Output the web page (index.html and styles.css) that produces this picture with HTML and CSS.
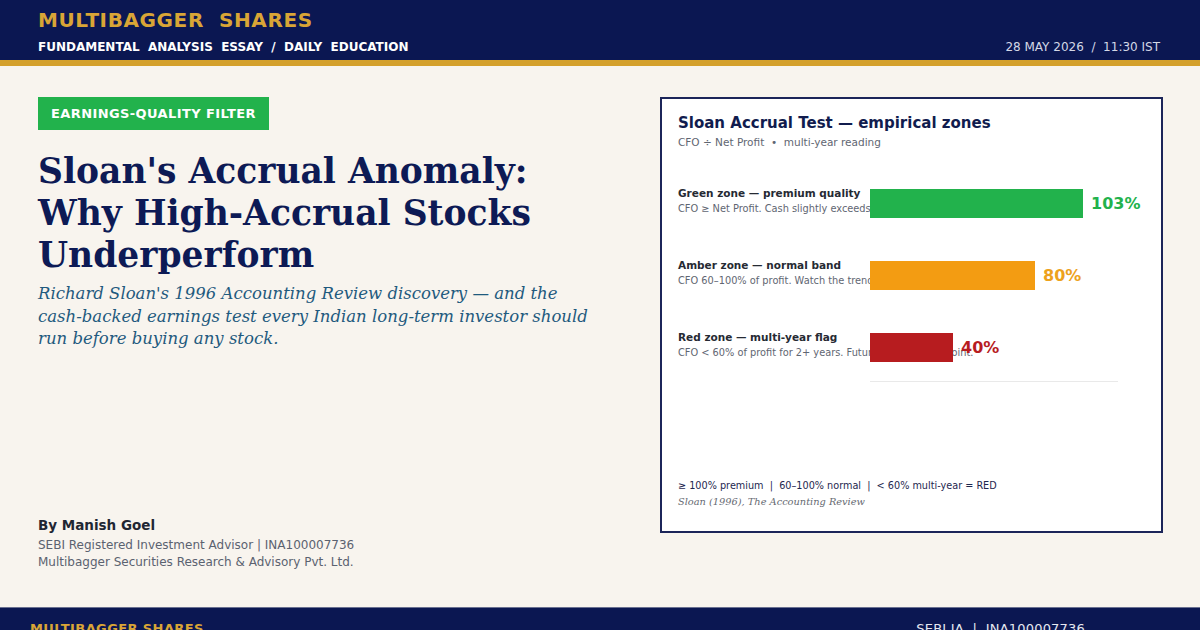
FILE: index.html
```html
<!DOCTYPE html>
<html lang="en">
<head>
<meta charset="utf-8">
<title>Sloan's Accrual Anomaly</title>
<link rel="stylesheet" href="styles.css">
</head>
<body>
<div class="page">
  <header class="masthead">
    <div class="brand">
      <div class="brand-name">MULTIBAGGER&nbsp; SHARES</div>
      <div class="brand-tag">FUNDAMENTAL&nbsp; ANALYSIS&nbsp; ESSAY&nbsp; /&nbsp; DAILY&nbsp; EDUCATION</div>
    </div>
    <div class="dateline">28 MAY 2026&nbsp; /&nbsp; 11:30 IST</div>
  </header>
  <div class="gold-rule"></div>

  <main class="main">
    <section class="lead">
      <div class="badge">EARNINGS-QUALITY FILTER</div>
      <h1 class="title">Sloan's Accrual Anomaly: Why High-Accrual Stocks Underperform</h1>
      <p class="dek">Richard Sloan's 1996 Accounting Review discovery — and the cash-backed earnings test every Indian long-term investor should run before buying any stock.</p>
      <div class="author">
        <div class="author-name">By Manish Goel</div>
        <div class="author-line">SEBI Registered Investment Advisor | INA100007736</div>
        <div class="author-line">Multibagger Securities Research &amp; Advisory Pvt. Ltd.</div>
      </div>
    </section>

    <aside class="card">
      <div class="card-title">Sloan Accrual Test — empirical zones</div>
      <div class="card-sub">CFO ÷ Net Profit&nbsp; •&nbsp; multi-year reading</div>

      <div class="rows">
        <div class="row">
          <div class="row-text">
            <div class="row-label">Green zone — premium quality</div>
            <div class="row-desc">CFO ≥ Net Profit. Cash slightly exceeds reported profit.</div>
          </div>
          <div class="track">
            <div class="bar bar-green" style="width:213px"></div>
            <div class="val val-green">103%</div>
          </div>
        </div>
        <div class="row">
          <div class="row-text">
            <div class="row-label">Amber zone — normal band</div>
            <div class="row-desc">CFO 60–100% of profit. Watch the trend closely.</div>
          </div>
          <div class="track">
            <div class="bar bar-amber" style="width:165px"></div>
            <div class="val val-amber">80%</div>
          </div>
        </div>
        <div class="row">
          <div class="row-text">
            <div class="row-label">Red zone — multi-year flag</div>
            <div class="row-desc">CFO &lt; 60% of profit for 2+ years. Future returns disappoint.</div>
          </div>
          <div class="track">
            <div class="bar bar-red" style="width:83px"></div>
            <div class="val val-red">40%</div>
          </div>
        </div>
        <div class="axis"></div>
      </div>

      <div class="legend">
        <div class="legend-key">≥ 100% premium&nbsp; |&nbsp; 60–100% normal&nbsp; |&nbsp; &lt; 60% multi-year = RED</div>
        <div class="legend-src">Sloan (1996), The Accounting Review</div>
      </div>
    </aside>
  </main>

  <footer class="footer">
    <div class="footer-brand">MULTIBAGGER SHARES</div>
    <div class="footer-reg">SEBI IA&nbsp; |&nbsp; INA100007736</div>
  </footer>
</div>
</body>
</html>
```

FILE: styles.css
```css
* { box-sizing: border-box; }

html, body {
  margin: 0;
  padding: 0;
}

body {
  font-family: "DejaVu Sans", "Liberation Sans", sans-serif;
  background: #f8f4ee;
}

.page {
  width: 1200px;
  height: 630px;
  overflow: hidden;
  display: flex;
  flex-direction: column;
  background: #f8f4ee;
}

/* ---------- masthead ---------- */
.masthead {
  height: 60px;
  flex: none;
  background: #0b1752;
  display: flex;
  justify-content: space-between;
  align-items: flex-end;
  padding: 0 40px 5px 38px;
}

.brand-name {
  color: #d9a536;
  font-weight: bold;
  font-size: 20px;
  line-height: 24px;
  letter-spacing: 0.6px;
}

.brand-tag {
  color: #ffffff;
  font-weight: bold;
  font-size: 12px;
  line-height: 15px;
  letter-spacing: 0;
  margin-top: 8px;
}

.dateline {
  color: #d4d8e6;
  font-size: 12px;
  line-height: 15px;
}

.gold-rule {
  height: 6px;
  flex: none;
  background: #d4a02c;
}

/* ---------- main ---------- */
.main {
  height: 541px;
  flex: none;
  display: flex;
  padding: 31px 37px 36px 38px;
}

.lead {
  width: 622px;
  flex: none;
  display: flex;
  flex-direction: column;
  align-items: flex-start;
}

.badge {
  background: #22b24c;
  color: #ffffff;
  font-weight: bold;
  font-size: 13px;
  letter-spacing: 0.4px;
  height: 33px;
  line-height: 33px;
  padding: 0 13px;
}

.title {
  margin: 20px 0 0;
  font-family: "DejaVu Serif", "Liberation Serif", serif;
  font-weight: bold;
  font-size: 34.5px;
  line-height: 42px;
  color: #0d1a55;
  width: 540px;
}

.dek {
  margin: 7px 0 0;
  font-family: "DejaVu Serif", "Liberation Serif", serif;
  font-style: italic;
  font-size: 16.5px;
  line-height: 22.5px;
  color: #1f5a7e;
  width: 565px;
}

.author {
  margin-top: auto;
}

.author-name {
  font-weight: bold;
  font-size: 13.5px;
  line-height: 18px;
  color: #1f2633;
  margin-bottom: 3px;
}

.author-line {
  font-size: 12px;
  line-height: 17px;
  color: #5b6270;
}

/* ---------- card ---------- */
.card {
  width: 503px;
  height: 436px;
  flex: none;
  background: #ffffff;
  border: 2px solid #1c2559;
  padding: 15px 16px 21px 16px;
  display: flex;
  flex-direction: column;
}

.card-title {
  font-weight: bold;
  font-size: 15px;
  line-height: 19px;
  color: #111c4e;
}

.card-sub {
  font-size: 10.5px;
  line-height: 14px;
  color: #5f6672;
  margin-top: 2px;
}

.rows {
  margin-top: 40px;
  display: flex;
  flex-direction: column;
  gap: 43px;
}

.row {
  display: grid;
  grid-template-columns: 192px 248px;
  height: 29px;
}

.row-text {
  grid-column: 1 / 3;
  grid-row: 1;
  margin-top: -4px;
  white-space: nowrap;
}

.row-label {
  font-weight: bold;
  font-size: 10.5px;
  line-height: 16px;
  color: #262a33;
}

.row-desc {
  font-size: 9.8px;
  line-height: 16px;
  color: #5f6672;
}

.track {
  grid-column: 2;
  grid-row: 1;
  display: flex;
  align-items: center;
  gap: 8px;
  z-index: 1;
}

.bar {
  height: 29px;
  flex: none;
}

.bar-green { background: #22b24c; }
.bar-amber { background: #f39c12; }
.bar-red   { background: #b71c1f; }

.val {
  font-weight: bold;
  font-size: 16px;
  line-height: 20px;
  white-space: nowrap;
}

.val-green { color: #22b24c; }
.val-amber { color: #eda21c; }
.val-red   { color: #b71c1f; }

.axis {
  margin: -24px 0 0 192px;
  width: 248px;
  height: 1px;
  background: #e9e9e9;
}

.legend {
  margin-top: auto;
}

.legend-key {
  font-size: 9.7px;
  line-height: 16px;
  color: #1e274f;
  white-space: nowrap;
}

.legend-src {
  font-family: "DejaVu Serif", "Liberation Serif", serif;
  font-style: italic;
  font-size: 9.8px;
  line-height: 16px;
  color: #666a72;
}

/* ---------- footer ---------- */
.footer {
  flex: none;
  height: 60px;
  background: #0b1752;
  border-top: 1px solid #6a7090;
  display: flex;
  justify-content: space-between;
  align-items: flex-start;
  padding: 13px 115px 0 30px;
}

.footer-brand {
  color: #d9a536;
  font-weight: bold;
  font-size: 13px;
  line-height: 16px;
  letter-spacing: 0.4px;
}

.footer-reg {
  color: #e6e8f0;
  font-size: 13px;
  line-height: 16px;
  letter-spacing: 0.2px;
}
```
